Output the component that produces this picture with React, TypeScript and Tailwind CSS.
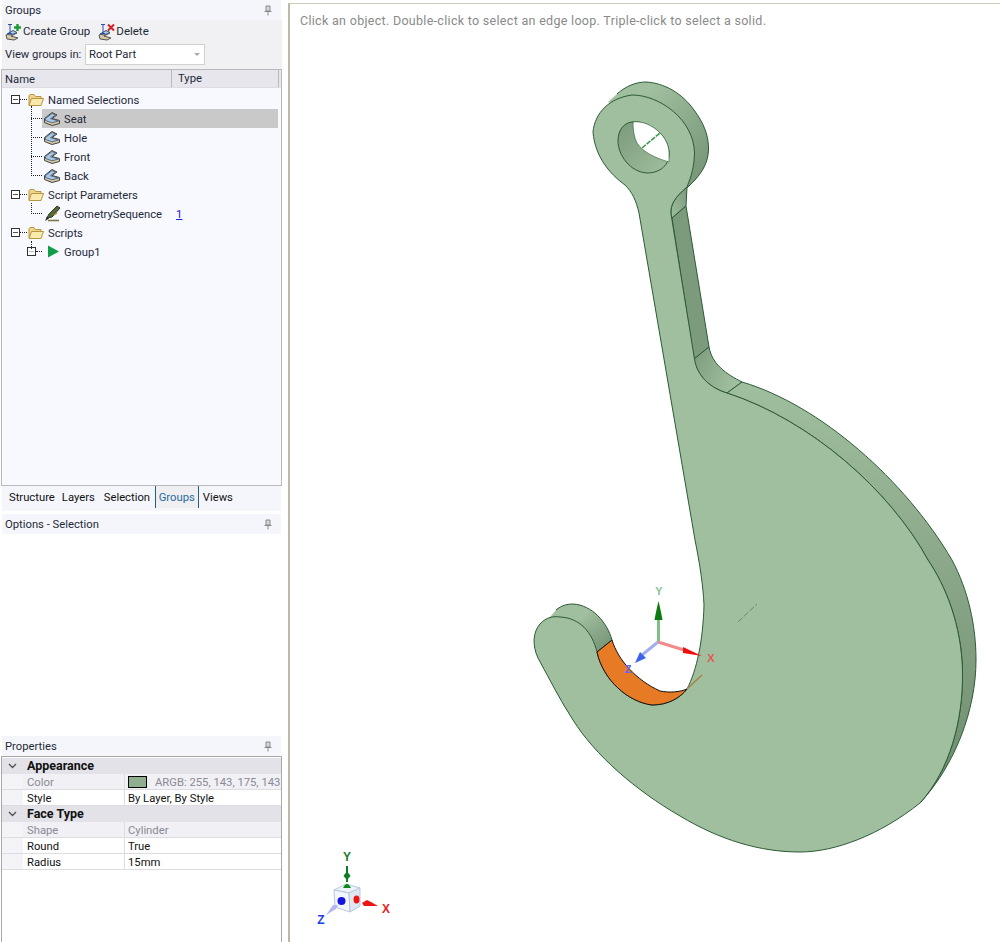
import React from "react";

const FONT = { fontFamily: "Roboto, 'Liberation Sans', sans-serif" };

function Pin() {
  return (
    <svg width="8" height="11" viewBox="0 0 8 11" className="shrink-0">
      <path d="M2 1h4v5H2z" fill="#d8d8dc" stroke="#8a8a8a" />
      <path d="M0.5 6.5h7" stroke="#8a8a8a" />
      <path d="M4 7v3.5" stroke="#8a8a8a" />
    </svg>
  );
}

function PanelHeader({ title }: { title: string }) {
  return (
    <div className="flex items-center justify-between bg-[#f5f6fb] pl-[3px] pr-[9px] ml-[2px] w-[279px] h-[20px] shrink-0">
      <span className="text-[#1e2a3a] pt-[1px]">{title}</span>
      <Pin />
    </div>
  );
}

function FaceIcon() {
  return (
    <svg width="16" height="14" viewBox="0 0 16 14" className="shrink-0">
      <path d="M0.500 6.500 L8 0.500 L13 3 L8 6.500 L15.500 8.500 L15.500 11.500 L8 13.500 L0.500 10.500 Z" fill="#d8c7a4" stroke="#444" />
      <path d="M1.500 6.500 L8 1.500 L11.500 3 L6.500 6.700 L14.500 9 L8 10.800 L1.500 8.500 Z" fill="#a9c8e6" stroke="#3c5470" strokeWidth="0.8" />
    </svg>
  );
}

function GroupIcon({ mark }: { mark: "plus" | "x" }) {
  return (
    <svg width="17" height="18" viewBox="0 0 17 18" className="shrink-0">
      <path d="M1 12 L8 8 L12 10 L6 13 L13 15 L9 17 L2 16 Z" fill="#d8c7a4" stroke="#555" />
      <path d="M2 11 L8 7.500 L12 9.500 L6 12 Z" fill="#a9c8e6" stroke="#45586c" />
      <path d="M3 1.500h4M5 1.500v9M3 10.500h4" stroke="#2a4fb0" strokeWidth="1" fill="none" />
      {mark === "plus" ? (
        <path d="M12.500 1v7M9 4.500h7" stroke="#1f9a3a" strokeWidth="2.400" />
      ) : (
        <path d="M10 1.500l6 6M16 1.500l-6 6" stroke="#d0202a" strokeWidth="2" />
      )}
    </svg>
  );
}

function Folder() {
  return (
    <svg width="16" height="14" viewBox="0 0 16 14" className="shrink-0">
      <path d="M1 12 V2.500 L2 1.500 H6 L7.500 3.500 H13 V5" fill="#ecd68a" stroke="#b8953f" />
      <path d="M1 12.500 L3.500 5.500 H15.500 L13 12.500 Z" fill="#f8e9ac" stroke="#b8953f" />
    </svg>
  );
}

function Pencil() {
  return (
    <svg width="17" height="17" viewBox="0 0 17 17" className="shrink-0">
      <path d="M3 13 L5 9 L13 1 L16 3 L8 12 Z" fill="#55683a" stroke="#2e3a1e" />
      <path d="M1 16 L5 13.500 L3 11.500 Z" fill="#222" />
      <path d="M4 15.500 H15" stroke="#7e7a40" strokeWidth="1.600" />
      <path d="M10 10 L13 8" stroke="#c98a3a" strokeWidth="1.400" />
    </svg>
  );
}

function Box({ plus }: { plus?: boolean }) {
  return (
    <span className="w-[9px] h-[9px] border border-[#333] bg-white flex items-center justify-center shrink-0">
      <span className={plus ? "w-[5px] h-[1px] bg-[#bbb]" : "w-[5px] h-[1px] bg-[#555]"} />
    </span>
  );
}

function HDots({ w }: { w: string }) {
  return <span className={`border-t border-dotted border-[#222] shrink-0 ${w}`} />;
}

function FolderRow({ label }: { label: string }) {
  return (
    <div className="flex items-center h-[19px] pl-[9px]">
      <Box />
      <HDots w="w-[7px]" />
      <span className="ml-[1px] mr-[4px] flex"><Folder /></span>
      <span className="text-[#1e2a3a] pt-[2px]">{label}</span>
    </div>
  );
}

function LeafRow({ label, selected, icon, extra }: { label: string; selected?: boolean; icon: React.ReactNode; extra?: React.ReactNode }) {
  return (
    <div className="flex items-center h-[19px] pl-[29px] pr-[3px]">
      <HDots w="w-[11px]" />
      <div className={`flex items-center flex-1 h-[19px] pl-[2px] ${selected ? "bg-[#c9c9c9]" : ""}`}>
        <span className="w-[20px] flex shrink-0">{icon}</span>
        <span className="text-[#1e2a3a] pt-[2px]">{label}</span>
        {extra}
      </div>
    </div>
  );
}

function Tree() {
  return (
    <div className="relative flex-1 pt-[2px] bg-[#f8f8ff]">
      <span className="absolute left-[29px] top-[18px] h-[70px] border-l border-dotted border-[#222]" />
      <span className="absolute left-[29px] top-[115px] h-[11px] border-l border-dotted border-[#222]" />
      <span className="absolute left-[29px] top-[153px] h-[8px] border-l border-dotted border-[#222]" />
      <FolderRow label="Named Selections" />
      <LeafRow label="Seat" selected icon={<FaceIcon />} />
      <LeafRow label="Hole" icon={<FaceIcon />} />
      <LeafRow label="Front" icon={<FaceIcon />} />
      <LeafRow label="Back" icon={<FaceIcon />} />
      <FolderRow label="Script Parameters" />
      <LeafRow
        label="GeometrySequence"
        icon={<Pencil />}
        extra={<span className="ml-[14px] pt-[2px] text-[#1a1ae0] underline">1</span>}
      />
      <FolderRow label="Scripts" />
      <div className="flex items-center h-[19px] pl-[25px]">
        <Box plus />
        <HDots w="w-[6px]" />
        <svg width="13" height="13" viewBox="0 0 13 13" className="ml-[5px] mr-[4px] shrink-0">
          <path d="M1 0.500 L12 6.500 L1 12.500 Z" fill="#0f9d4a" />
        </svg>
        <span className="text-[#1e2a3a] pt-[2px]">Group1</span>
      </div>
    </div>
  );
}

function PropGroup({ label }: { label: string }) {
  return (
    <div className="flex items-center h-[16px] bg-[#e2e2e8]">
      <svg width="9" height="6" viewBox="0 0 9 6" className="ml-[6px] mr-[10px] shrink-0">
        <path d="M1 1 L4.500 4.500 L8 1" fill="none" stroke="#555" strokeWidth="1.400" />
      </svg>
      <span className="font-bold text-[12.5px] text-[#111] pt-[1px]">{label}</span>
    </div>
  );
}

function PropRow({ name, value, gray, swatch }: { name: string; value: string; gray?: boolean; swatch?: boolean }) {
  return (
    <div className="flex h-[16px] border-b border-[#dcdce2]">
      <div className="w-[21px] bg-[#f3f3f8] shrink-0" />
      <div className={`w-[102px] shrink-0 pl-[4px] pt-[2px] border-r border-[#dcdce2] leading-[13px] ${gray ? "bg-[#f0f0f5] text-[#8a8a94]" : "bg-white text-[#111]"}`}>
        {name}
      </div>
      <div className={`flex-1 flex items-center pl-[3px] pt-[1px] whitespace-nowrap overflow-hidden leading-[13px] ${gray ? "bg-[#f0f0f5] text-[#8a8a94]" : "bg-white text-[#111]"}`}>
        {swatch && <span className="w-[19px] h-[12px] bg-[#8fae8f] border border-black mr-[8px] shrink-0" />}
        {value}
      </div>
    </div>
  );
}

function Hook() {
  const stroke = "#2c5a36";
  const label = { fontFamily: "'Liberation Sans', sans-serif" };
  return (
    <svg viewBox="290 4 710 938" className="absolute inset-0 w-full h-full">
      <defs>
        <linearGradient id="ring" x1="0" y1="0" x2="1" y2="1">
          <stop offset="0.25" stopColor="#a0bf9e" />
          <stop offset="0.85" stopColor="#7b9a7c" />
        </linearGradient>
        <linearGradient id="band" x1="0" y1="0" x2="0" y2="1">
          <stop offset="0" stopColor="#a0bf9e" />
          <stop offset="0.45" stopColor="#8aa889" />
          <stop offset="1" stopColor="#6d8b6d" />
        </linearGradient>
        <linearGradient id="tip" x1="0" y1="0" x2="1" y2="1">
          <stop offset="0.4" stopColor="#a0bf9e" />
          <stop offset="1" stopColor="#6f8d70" />
        </linearGradient>
        <linearGradient id="fillet" x1="0" y1="0" x2="1" y2="0.4">
          <stop offset="0" stopColor="#7d9c7e" />
          <stop offset="1" stopColor="#a0bf9e" />
        </linearGradient>
        <linearGradient id="filletTop" x1="0" y1="1" x2="1" y2="0">
          <stop offset="0" stopColor="#a0bf9e" />
          <stop offset="1" stopColor="#7b9a7c" />
        </linearGradient>
        <linearGradient id="holeWall" x1="0" y1="0" x2="1" y2="1">
          <stop offset="0" stopColor="#7b9a7c" />
          <stop offset="1" stopColor="#a0bf9e" />
        </linearGradient>
      </defs>

      {/* ring side */}
      <path d="M608 102 L617 94 C626 86 636 82 646 82 C664 83 682 93 694 110 C703 122 709 135 708.500 150 C708 163 702 172 695 180 L687 188 L680 150 L640 115 Z" fill="url(#ring)" />
      <path d="M617 94 C626 86 636 82 646 82 C664 83 682 93 694 110 C703 122 709 135 708.500 150 C708 163 702 172 695 180 L687 188" fill="none" stroke={stroke} />
      {/* stem top fillet */}
      <path d="M671 214 C670 205 675 197 687 187 L686 206 L672 218 Z" fill="url(#filletTop)" stroke={stroke} />
      {/* stem side */}
      <path d="M672 218 L686 206 L709 347 L694 359 Z" fill="#7c9a7c" stroke={stroke} />
      {/* bottom fillet */}
      <path d="M694 359 L709 347 C712 364 726 374 742 382 L727 393 C710 388 697 376 694 359 Z" fill="url(#fillet)" stroke={stroke} />
      {/* disc side band */}
      <path
        d="M742 382 C820 405 905 480 952 560 C968 590 976 625 976 660 C976 710 955 765 920 803 C950 770 963 720 962.500 673 C962 625 945 585 928 560 C890 490 810 420 727 393 Z"
        fill="url(#band)"
        stroke={stroke}
      />
      {/* tip side */}
      <path d="M546 622 L556 610 C562 605 568 604 573 604 C592 605 607 622 612 640 L597 652 L590 640 L575 628 L555 628 Z" fill="url(#tip)" />
      <path d="M556 610 C562 605 568 604 573 604 C592 605 607 622 612 640 L597 652" fill="none" stroke={stroke} />
      {/* front face */}
      <path
        d="M639 213 C636 200 632 192 625 185 C610 174 595 157 593 132 C595 112 610 98 632 95 C660 95 694 120 694.500 153 C694 167 692 174 687 187 C675 197 670 205 671 214 L694.500 359 C697 376 710 388 727 393 C810 420 890 490 928 560 C945 585 962 625 962.500 673 C963 720 950 770 920 803 C880 835 835 852 800 852 C760 852 720 840 680 816 C635 790 595 755 573 720 C560 700 550 680 538 658 C532 645 533 632 540 624 C546 617 554 616 560 617 C580 618 592 632 597 652 C603 680 628 702 652 705 C668 705 680 698 687 689 C697 670 703 640 704 605 C703 585 700 565 695 540 Z"
        fill="#a0bf9e"
        stroke={stroke}
      />
      {/* orange face */}
      <path
        d="M597 652 L612 640 C618 660 636 680 660 691 C670 693 680 692 687 689 C680 698 668 705 652 705 C628 702 603 680 597 652 Z"
        fill="#e67a25"
        stroke="#111"
      />
      {/* hole */}
      <path d="M632 122 C648 120 668 134 669 152 C670 165 660 173 647 173 C630 172 618 155 618 141 C618 131 623 123 632 122 Z" fill="url(#holeWall)" stroke={stroke} />
      <path d="M633 122 C648 120 668 134 669 152 L669 162 C655 158 643 152 637 143 C634 137 633 130 633 122 Z" fill="#fff" stroke={stroke} strokeWidth="0.6" />
      <path d="M642 148 L660 133" stroke="#3d9a50" strokeWidth="1.600" strokeDasharray="5 1" />
      <path d="M738 622 L757 604" stroke="#5f9067" strokeWidth="1" strokeDasharray="6 2" />
      <path d="M687 689 L702 675" stroke="#a8824a" strokeWidth="1.600" />

      {/* main triad */}
      <path d="M658.500 642 V618" stroke="#7fbf85" strokeWidth="3" />
      <path d="M658.500 601 L656 612 L654.500 620 H662.500 L661 612 Z" fill="#0b7a10" />
      <path d="M658 642 L684 650" stroke="#f58a8a" strokeWidth="3" />
      <path d="M702 656 L683 647 L683 653 Z" fill="#f01010" />
      <path d="M658 642 L642 655" stroke="#a0b0ee" strokeWidth="3" />
      <path d="M635 663 L640 652 L646 658 Z" fill="#3c62e8" />
      <text x="659" y="595" textAnchor="middle" fontSize="11" fontWeight="700" fill="#8cc596" style={label}>Y</text>
      <text x="711" y="662" textAnchor="middle" fontSize="11" fontWeight="700" fill="#e05a5a" style={label}>X</text>
      <text x="628" y="673" textAnchor="middle" fontSize="11" fontWeight="700" fill="#6a62f0" style={label}>Z</text>

      {/* corner triad */}
      <path d="M347 866 V882" stroke="#0d7d24" strokeWidth="2" />
      <path d="M347 871 L343.500 876 L347 880 L350.500 876 Z" fill="#0d7d24" />
      <path d="M334 890 L346 884 L360 888 L349 893 Z" fill="#eef3fb" stroke="#b9c8dc" />
      <path d="M334 890 L349 893 L350 912 L335 907 Z" fill="#f3f6fc" stroke="#b9c8dc" />
      <path d="M349 893 L360 888 L360 906 L350 912 Z" fill="#dfe7f3" stroke="#b9c8dc" />
      <path d="M343 888 Q347 880 351 888 Z" fill="#0d8a1e" />
      <circle cx="341.500" cy="901" r="4" fill="#1414e0" />
      <ellipse cx="356.500" cy="899.500" rx="3" ry="4" fill="#ee1414" />
      <path d="M362 903 L367 900 L371 902 L378 906 L364 906 Z" fill="#ee1414" />
      <path d="M326 915 L333 905 L338 905 L336 909 Z" fill="#b4b8f2" />
      <text x="347" y="861" textAnchor="middle" fontSize="12" fontWeight="700" fill="#1f7a30" style={label}>Y</text>
      <text x="386" y="912.500" textAnchor="middle" fontSize="12" fontWeight="700" fill="#ee2020" style={label}>X</text>
      <text x="321" y="923.500" textAnchor="middle" fontSize="12" fontWeight="700" fill="#2040f0" style={label}>Z</text>
    </svg>
  );
}

export default function App() {
  return (
    <div className="flex w-[1000px] h-[942px] bg-white overflow-hidden text-[11.25px] leading-none" style={FONT}>
      <div className="w-[288px] shrink-0 flex flex-col bg-white">
        <PanelHeader title="Groups" />
        <div className="h-[49px] bg-[#f1f1f3] ml-[2px] w-[280px] shrink-0">
          <div className="flex items-center h-[22px] pl-[3px] pt-[2px] text-[11.5px]">
            <GroupIcon mark="plus" />
            <span className="ml-[1px] text-[#1e2a3a]">Create Group</span>
            <span className="ml-[8px] flex"><GroupIcon mark="x" /></span>
            <span className="ml-[1px] text-[#1e2a3a]">Delete</span>
          </div>
          <div className="flex items-center h-[24px] pl-[3px]">
            <span className="text-[#1e2a3a] w-[80px] pt-[2px]">View groups in:</span>
            <div className="w-[120px] h-[21px] bg-white border border-[#d0d0d0] flex items-center justify-between pl-[3px] pr-[4px]">
              <span className="text-[#1e2a3a] pt-[2px]">Root Part</span>
              <span className="w-0 h-0 border-x-[3px] border-x-transparent border-t-[3px] border-t-[#aaa]" />
            </div>
          </div>
        </div>
        <div className="ml-[1px] w-[281px] h-[417px] border border-[#b8b8b8] flex flex-col shrink-0">
          <div className="flex h-[18px] bg-[#e6e6ec] shrink-0 items-center border-b border-[#dcdce2]">
            <div className="w-[170px] pl-[3px] pt-[2px] border-r border-[#b8b8c0] h-full flex items-center text-[#1e2a3a]">Name</div>
            <div className="w-[107px] pl-[6px] border-r border-[#b8b8c0] h-full flex items-center text-[#1e2a3a]">Type</div>
          </div>
          <Tree />
        </div>
        <div className="flex h-[25px] ml-[2px] w-[279px] bg-[#f5f6fb] shrink-0 items-start text-[#111]">
          <span className="ml-[7px] h-[22px] pt-[2px] flex items-center">Structure</span>
          <span className="ml-[7px] h-[22px] pt-[2px] flex items-center">Layers</span>
          <span className="ml-[9px] w-[51px] h-[22px] pt-[2px] flex items-center">Selection</span>
          <span className="h-[22px] w-[44px] pt-[2px] border-x border-[#1f5f8f] bg-[#efeff2] text-[#2a6a9a] flex items-center justify-center">Groups</span>
          <span className="ml-[4px] h-[22px] pt-[2px] flex items-center">Views</span>
        </div>
        <div className="h-[3px] shrink-0" />
        <PanelHeader title="Options - Selection" />
        <div className="h-[202px] shrink-0" />
        <PanelHeader title="Properties" />
        <div className="ml-[1px] w-[281px] flex-1 pt-[1px] border border-[#a8a8a8] border-b-0 flex flex-col">
          <PropGroup label="Appearance" />
          <PropRow name="Color" value="ARGB: 255, 143, 175, 143" gray swatch />
          <PropRow name="Style" value="By Layer, By Style" />
          <PropGroup label="Face Type" />
          <PropRow name="Shape" value="Cylinder" gray />
          <PropRow name="Round" value="True" />
          <PropRow name="Radius" value="15mm" />
        </div>
      </div>
      <div className="relative flex-1 mt-[3px] border-l-[2px] border-t border-[#bdb9a6] border-t-[#cfcbbb]">
        <Hook />
        <div className="relative pt-[11px] pl-[10px] text-[12.5px] text-[#8a8a8a] tracking-[0.3px]">
          Click an object. Double-click to select an edge loop. Triple-click to select a solid.
        </div>
      </div>
    </div>
  );
}
